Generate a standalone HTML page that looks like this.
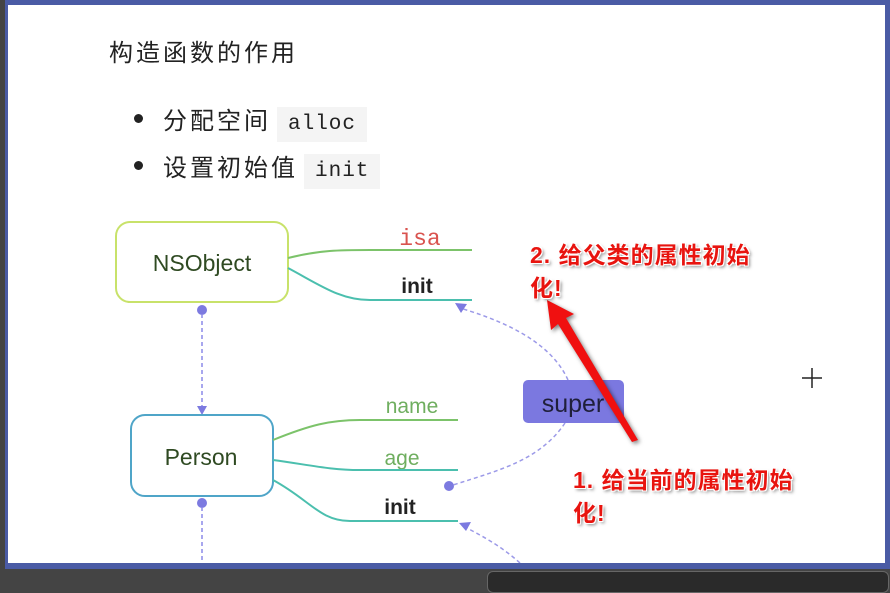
<!DOCTYPE html>
<html><head><meta charset="utf-8"><style>
body{margin:0;width:890px;height:582px;overflow:hidden;background:#444;position:relative;font-family:"Liberation Sans","Noto Sans CJK SC",sans-serif}
.frame{position:absolute;left:5px;top:0;width:885px;height:569px;background:#4a5ba5}
.page{position:absolute;left:8px;top:5px;width:877px;height:558px;background:#fff;overflow:hidden}
.dock{position:absolute;left:487px;top:571px;width:400px;height:20px;background:#2a2a2a;border:1px solid #666;border-radius:6px}
.t{position:absolute;color:#222;font-size:24px;letter-spacing:3px;white-space:nowrap}
.code{font-family:"Liberation Mono",monospace;font-size:21px;letter-spacing:1px;background:#f4f4f4;padding:6px 11px;margin-left:6px}
.dot{position:absolute;width:9px;height:9px;border-radius:50%;background:#222}
.red{position:absolute;color:#e8140f;font-weight:bold;font-size:23px;letter-spacing:1px;white-space:nowrap;text-shadow:-1px -1px 0 #fff,1px -1px 0 #fff,-1px 1px 0 #fff,1px 1px 0 #fff,2px 2px 3px rgba(0,0,0,.5);font-family:"Liberation Sans","Noto Sans CJK SC",sans-serif}
</style></head><body>
<div class="frame"></div>
<div class="page">
<div class="t" style="left:101px;top:28px">构造函数的作用</div>
<div class="dot" style="left:126px;top:109px"></div>
<div class="t" style="left:155px;top:96px">分配空间<span class="code">alloc</span></div>
<div class="dot" style="left:126px;top:156px"></div>
<div class="t" style="left:155px;top:143px">设置初始值<span class="code">init</span></div>
</div>
<svg width="890" height="582" style="position:absolute;left:0;top:0" font-family="Liberation Sans, sans-serif">
<defs><clipPath id="c"><rect x="8" y="5" width="877" height="558"/></clipPath></defs>
<g clip-path="url(#c)">
<rect x="116" y="222" width="172" height="80" rx="14" fill="#fff" stroke="#c8e26a" stroke-width="2"/>
<text x="202" y="271" font-size="23" text-anchor="middle" fill="#2f4a22">NSObject</text>
<text x="420" y="245" font-size="23" text-anchor="middle" fill="#d9534f" font-family="Liberation Mono, monospace">isa</text>
<path d="M288 258 C320 250 340 250 370 250 L472 250" stroke="#7cc36a" stroke-width="2" fill="none"/>
<text x="417" y="293" font-size="21" font-weight="bold" text-anchor="middle" fill="#222">init</text>
<path d="M288 268 C320 285 340 300 370 300 L472 300" stroke="#4bbfae" stroke-width="2" fill="none"/>
<circle cx="202" cy="310" r="5" fill="#7c7ae0"/>
<line x1="202" y1="314" x2="202" y2="408" stroke="#8c8ae8" stroke-width="1.5" stroke-dasharray="4 3"/>
<path d="M197 406 L207 406 L202 415 Z" fill="#7c7ae0"/>
<rect x="131" y="415" width="142" height="81" rx="14" fill="#fff" stroke="#4fa5c8" stroke-width="2"/>
<text x="201" y="465" font-size="23" text-anchor="middle" fill="#2f4a22">Person</text>
<text x="412" y="413" font-size="21" text-anchor="middle" fill="#6fae5f">name</text>
<path d="M273 440 C310 425 330 420 360 420 L458 420" stroke="#7cc36a" stroke-width="2" fill="none"/>
<text x="402" y="465" font-size="21" text-anchor="middle" fill="#6fae5f">age</text>
<path d="M273 460 C310 465 330 470 360 470 L458 470" stroke="#4bbfae" stroke-width="2" fill="none"/>
<text x="400" y="514" font-size="21" font-weight="bold" text-anchor="middle" fill="#222">init</text>
<path d="M273 480 C310 500 320 521 350 521 L458 521" stroke="#4bbfae" stroke-width="2" fill="none"/>
<circle cx="202" cy="503" r="5" fill="#7c7ae0"/>
<line x1="202" y1="507" x2="202" y2="582" stroke="#8c8ae8" stroke-width="1.5" stroke-dasharray="4 3"/>
<path d="M568 380 C550 340 500 320 460 308" stroke="#9c9ae8" stroke-width="1.5" stroke-dasharray="4 3" fill="none"/>
<path d="M455 303 L467 304 L461 313 Z" fill="#7c7ae0"/>
<path d="M565 423 C540 460 500 470 453 485" stroke="#9c9ae8" stroke-width="1.5" stroke-dasharray="4 3" fill="none"/>
<circle cx="449" cy="486" r="5" fill="#7c7ae0"/>
<path d="M520 563 C500 545 480 535 465 527" stroke="#9c9ae8" stroke-width="1.5" stroke-dasharray="4 3" fill="none"/>
<path d="M459 523 L471 522 L466 531 Z" fill="#7c7ae0"/>
<rect x="523" y="380" width="101" height="43" rx="5" fill="#7b78e0"/>
<text x="573" y="412" font-size="25" text-anchor="middle" fill="#1f1f3a">super</text>
<path d="M547 300 L574 314 L566 318 L638 440 L632 442 L558 324 L551 330 Z" fill="#f01010" style="filter:drop-shadow(2px 2px 2px rgba(0,0,0,.5))"/>
<line x1="812" y1="368" x2="812" y2="388" stroke="#222" stroke-width="1.5"/>
<line x1="802" y1="378" x2="822" y2="378" stroke="#222" stroke-width="1.5"/>
</g>
</svg>
<div class="red" style="left:530px;top:236px">2. 给父类的属性初始</div>
<div class="red" style="left:530px;top:269px">化!</div>
<div class="red" style="left:573px;top:461px">1. 给当前的属性初始</div>
<div class="red" style="left:573px;top:494px">化!</div>
<div class="dock"></div>
</body></html>
